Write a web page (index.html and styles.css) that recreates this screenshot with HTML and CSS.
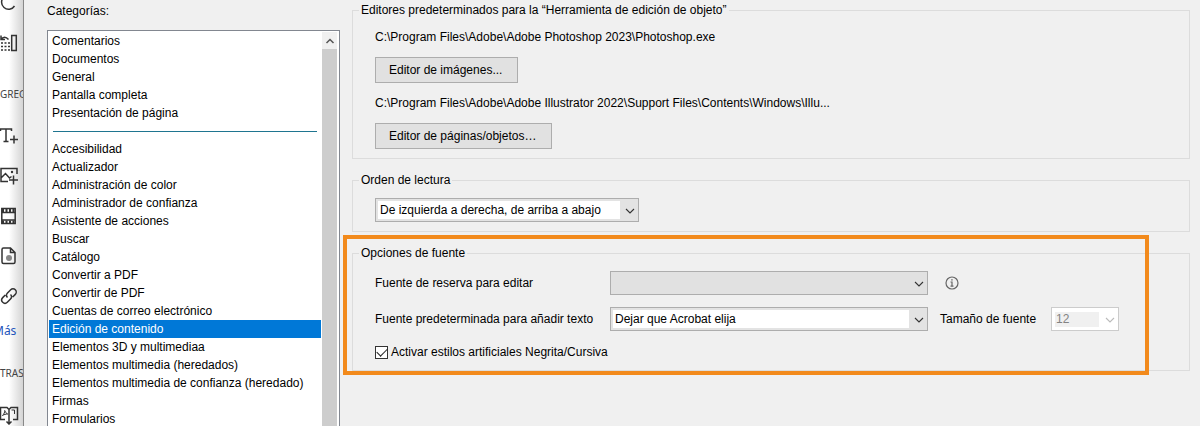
FILE: index.html
```html
<!DOCTYPE html>
<html lang="es">
<head>
<meta charset="utf-8">
<title>Preferencias</title>
<link rel="stylesheet" href="styles.css">
</head>
<body>
<div class="window">
  <nav class="rail" aria-label="Herramientas">
    <button class="tool" aria-label="Rotar"><svg viewBox="0 0 20 20"><path d="M15.500 5.500A7 7 0 1 0 15.500 13"/></svg></button>
    <button class="tool" aria-label="Organizar"><svg viewBox="0 0 20 20"><path d="M12.700 2.500h4.600v15h-4.600z"/><path d="M2 6.500C4 3.500 7 3.500 9.500 6.500M2 2.500v4h4"/><path stroke-dasharray="2 1.500" d="M2 10h9M2 13.500h9M2 17h9"/></svg></button>
    <p class="rail-title">GREG</p>
    <button class="tool" aria-label="Texto"><svg viewBox="0 0 20 20"><path d="M1.500 5V3h11v2M7 3v12.500M4.500 15.500h5M15 9.500v8M11 13.500h8"/></svg></button>
    <button class="tool" aria-label="Imagen"><svg viewBox="0 0 20 20"><path d="M9 15.500H2v-13h16V8M2 12l4.500-4.500 4 4.500 2-1.500M14.500 9.500v9M10 14h9"/><circle class="solid" cx="13" cy="6" r="1.200"/></svg></button>
    <button class="tool" aria-label="Vídeo"><svg viewBox="0 0 20 20"><path d="M2.800 2.500h13.400v15H2.800z"/><path d="M3 6.500h13M3 14h13"/><path stroke-width="3" stroke-dasharray="2 1.500" d="M3 4.500h13M3 16h13"/></svg></button>
    <button class="tool" aria-label="Archivo"><svg viewBox="0 0 20 20"><path d="M4.500 2h7l4.500 4.500V16a1.500 1.500 0 0 1-1.500 1.500h-10A1.500 1.500 0 0 1 3 16V3.500A1.500 1.500 0 0 1 4.500 2zM11.500 2v4.500H16"/><circle class="dot" cx="10" cy="12" r="3"/></svg></button>
    <button class="tool" aria-label="Enlace"><svg viewBox="0 0 20 20"><path d="M8.500 11.500a3.200 3.200 0 0 1 0-4.500l3.200-3.200a3.200 3.200 0 0 1 4.600 4.600l-2.600 2.600M11.500 8.500a3.200 3.200 0 0 1 0 4.500l-3.200 3.200a3.200 3.200 0 0 1-4.600-4.600l2.600-2.600"/></svg></button>
    <a class="more" href="#">Más</a>
    <p class="rail-title">TRAS</p>
    <button class="tool" aria-label="Exportar PDF"><svg viewBox="0 0 20 20"><path d="M6 14.500H1.500v-12H8l2 2v7M10 4.500l2-2h6.500v12H14M10 11v8M7.500 16.500L10 19l2.500-2.500"/><path stroke-width="1" d="M3.500 10.500C5 9 6 7 5.700 5.500c1 2 1.500 3 3 3.500-2 0-3.500.500-5.200 1.500M12.500 5h3v4"/></svg></button>
  </nav>

  <main class="dialog">
    <section class="categories">
      <h2 class="caption" id="cat">Categorías:</h2>
      <div class="listbox">
        <ul class="options" role="listbox" aria-labelledby="cat">
          <li role="option">Comentarios</li>
          <li role="option">Documentos</li>
          <li role="option">General</li>
          <li role="option">Pantalla completa</li>
          <li role="option">Presentación de página</li>
          <li class="divider" role="separator"></li>
          <li role="option">Accesibilidad</li>
          <li role="option">Actualizador</li>
          <li role="option">Administración de color</li>
          <li role="option">Administrador de confianza</li>
          <li role="option">Asistente de acciones</li>
          <li role="option">Buscar</li>
          <li role="option">Catálogo</li>
          <li role="option">Convertir a PDF</li>
          <li role="option">Convertir de PDF</li>
          <li role="option">Cuentas de correo electrónico</li>
          <li class="selected" role="option" aria-selected="true">Edición de contenido</li>
          <li role="option">Elementos 3D y multimediaa</li>
          <li role="option">Elementos multimedia (heredados)</li>
          <li role="option">Elementos multimedia de confianza (heredado)</li>
          <li role="option">Firmas</li>
          <li role="option">Formularios</li>
        </ul>
        <div class="scrollbar">
          <button class="scroll-up" aria-label="Subir"><svg viewBox="0 0 10 10"><path d="M1.500 7L5 3.500 8.500 7"/></svg></button>
          <div class="thumb"></div>
        </div>
      </div>
    </section>

    <form class="settings">
      <fieldset class="group editors">
        <legend>Editores predeterminados para la “Herramienta de edición de objeto”</legend>
        <p>C:\Program Files\Adobe\Adobe Photoshop 2023\Photoshop.exe</p>
        <button class="push" type="button">Editor de imágenes...</button>
        <p>C:\Program Files\Adobe\Adobe Illustrator 2022\Support Files\Contents\Windows\Illu...</p>
        <button class="push" type="button">Editor de páginas/objetos…</button>
      </fieldset>

      <fieldset class="group">
        <legend>Orden de lectura</legend>
        <span class="combo order">
          <select aria-label="Orden de lectura"><option>De izquierda a derecha, de arriba a abajo</option></select>
          <svg viewBox="0 0 10 10"><path d="M1 3l4 4 4-4"/></svg>
        </span>
      </fieldset>

      <fieldset class="group fonts">
        <legend>Opciones de fuente</legend>
        <div class="grid">
          <label for="fallback">Fuente de reserva para editar</label>
          <span class="combo empty">
            <select id="fallback"><option></option></select>
            <svg viewBox="0 0 10 10"><path d="M1 3l4 4 4-4"/></svg>
          </span>
          <button class="info" type="button" aria-label="Información"><svg viewBox="0 0 14 14"><circle cx="7" cy="7" r="6"/><path d="M5.500 6H7v4M5.500 10.200h3M6.200 3.800h1.500"/></svg></button>
          <label for="default">Fuente predeterminada para añadir texto</label>
          <span class="combo">
            <select id="default"><option>Dejar que Acrobat elija</option></select>
            <svg viewBox="0 0 10 10"><path d="M1 3l4 4 4-4"/></svg>
          </span>
          <div class="size">
            <label for="size">Tamaño de fuente</label>
            <span class="combo disabled">
              <select id="size" disabled><option>12</option></select>
              <svg viewBox="0 0 10 10"><path d="M1 3l4 4 4-4"/></svg>
            </span>
          </div>
        </div>
        <label class="check"><input type="checkbox" checked>Activar estilos artificiales Negrita/Cursiva</label>
        <div class="highlight"></div>
      </fieldset>
    </form>
  </main>
</div>
</body>
</html>
```

FILE: styles.css
```css
* { box-sizing: border-box; }

body {
  margin: 0;
  background: #f0f0f0;
  color: #000;
  font: 12px/18px "Liberation Sans", Arial, sans-serif;
}

p, h2, ul { margin: 0; padding: 0; }

button, select, input { font: inherit; color: inherit; margin: 0; }

svg {
  display: block;
  fill: none;
  stroke: #333;
  stroke-width: 1.5;
}

.window {
  display: flex;
  height: 100vh;
  overflow: hidden;
}

/* Tool rail, partly hidden behind the dialog */
.rail {
  flex: none;
  display: flex;
  flex-direction: column;
  align-items: flex-end;
  width: 24px;
  padding-right: 4px;
  overflow: hidden;
  background: linear-gradient(to right, #fff 9px, #d4d4d4);
  border-right: 1px solid #888;
}

.tool {
  flex: none;
  width: 20px;
  height: 20px;
  margin-bottom: 20px;
  padding: 0;
  border: 0;
  background: none;
}

.tool:first-child { margin-top: -7px; }

.solid { fill: #333; stroke: none; }
.dot { fill: #888; stroke: none; }

.rail-title, .more {
  flex: none;
  align-self: flex-start;
  height: 20px;
  line-height: 20px;
  white-space: nowrap;
  font-family: "Noto Sans", sans-serif;
}

.rail-title {
  margin: 11px 0 22px;
  font-size: 10px;
  color: #444;
}

.more {
  margin: -5px 0 11px -7px;
  font-size: 12px;
  color: #2255bb;
  text-decoration: none;
}

.dialog {
  flex: 1;
  display: flex;
  gap: 12px;
  min-width: 0;
  padding: 0 10px 0 23px;
}

/* Category list */
.categories {
  flex: none;
  display: flex;
  flex-direction: column;
  width: 293px;
}

.caption {
  padding: 2px 0 10px;
  font-size: 12px;
  font-weight: normal;
}

.listbox {
  flex: 1;
  display: flex;
  min-height: 0;
  padding: 1px 2px 0 1px;
  overflow: hidden;
  background: #fff;
  border: 1px solid #828790;
  border-bottom: 0;
}

.options { flex: 1; list-style: none; }
.options li { padding-left: 3px; white-space: nowrap; }
.options .selected { background: #0078d7; color: #fff; }

.options .divider {
  height: 1px;
  margin: 9px 4px 8px;
  background: #1f7590;
}

.scrollbar { width: 15px; margin-left: 1px; background: #cdcdcd; }

.scroll-up {
  display: grid;
  place-items: center;
  width: 100%;
  height: 17px;
  padding: 0;
  border: 0;
  background: #f0f0f0;
}

.scroll-up svg { width: 10px; height: 10px; stroke: #555; }

/* Settings groups */
.settings {
  flex: 1;
  display: flex;
  flex-direction: column;
  gap: 12px;
  min-width: 0;
  padding-top: 1px;
}

.group {
  position: relative;
  min-width: 0;
  margin: 0;
  padding: 9px 22px;
  border: 1px solid #dcdcdc;
}

.group legend { margin-left: -16px; padding: 0 2px; }

.editors {
  display: flex;
  flex-direction: column;
  align-items: flex-start;
  gap: 11px;
}

.push {
  height: 26px;
  padding: 0 15px 0 13px;
  background: #e1e1e1;
  border: 1px solid #adadad;
}

.combo {
  position: relative;
  display: block;
}

.combo select {
  display: block;
  width: 100%;
  height: 24px;
  padding: 0 24px 0 4px;
  appearance: none;
  background: linear-gradient(#fff, #fff) 2px 2px / calc(100% - 20px) calc(100% - 4px) no-repeat #e3e3e3;
  border: 1px solid #adadad;
  border-radius: 0;
}

.combo svg {
  position: absolute;
  top: 8px;
  right: 4px;
  width: 10px;
  height: 10px;
  stroke-width: 1.1;
  pointer-events: none;
}

.combo.order { width: 264px; }
.combo.empty select { background: #e1e1e1; }

.combo.disabled { width: 68px; }
.combo.disabled select {
  color: #838383;
  opacity: 1;
  background: linear-gradient(#f0f0f0, #f0f0f0) 3px 4px / calc(100% - 22px) calc(100% - 7px) no-repeat #fff;
  border-color: #ccc;
}
.combo.disabled svg { stroke: #bbb; }

.grid {
  display: grid;
  grid-template-columns: 235px 318px 1fr;
  row-gap: 12px;
  align-items: center;
}

.info {
  width: 14px;
  height: 14px;
  margin-left: 17px;
  padding: 0;
  border: 0;
  background: none;
}

.info svg { stroke: #666; stroke-width: 1.2; }

.size {
  display: flex;
  align-items: center;
  gap: 15px;
  margin-left: 12px;
}

.check {
  display: flex;
  align-items: center;
  gap: 3px;
  margin-top: 12px;
}

.check input {
  width: 13px;
  height: 13px;
  appearance: none;
  display: grid;
  place-items: center;
  background: #fff;
  border: 1px solid #333;
}

.check input:checked::before {
  content: "";
  width: 9px;
  height: 5px;
  margin-top: -2px;
  border: solid #222;
  border-width: 0 0 1px 1px;
  transform: rotate(-45deg);
}

/* Callout frame drawn over the font options */
.highlight {
  position: absolute;
  inset: -27px 40px -5px -10px;
  border: 4px solid #f28a1c;
  pointer-events: none;
}
```
